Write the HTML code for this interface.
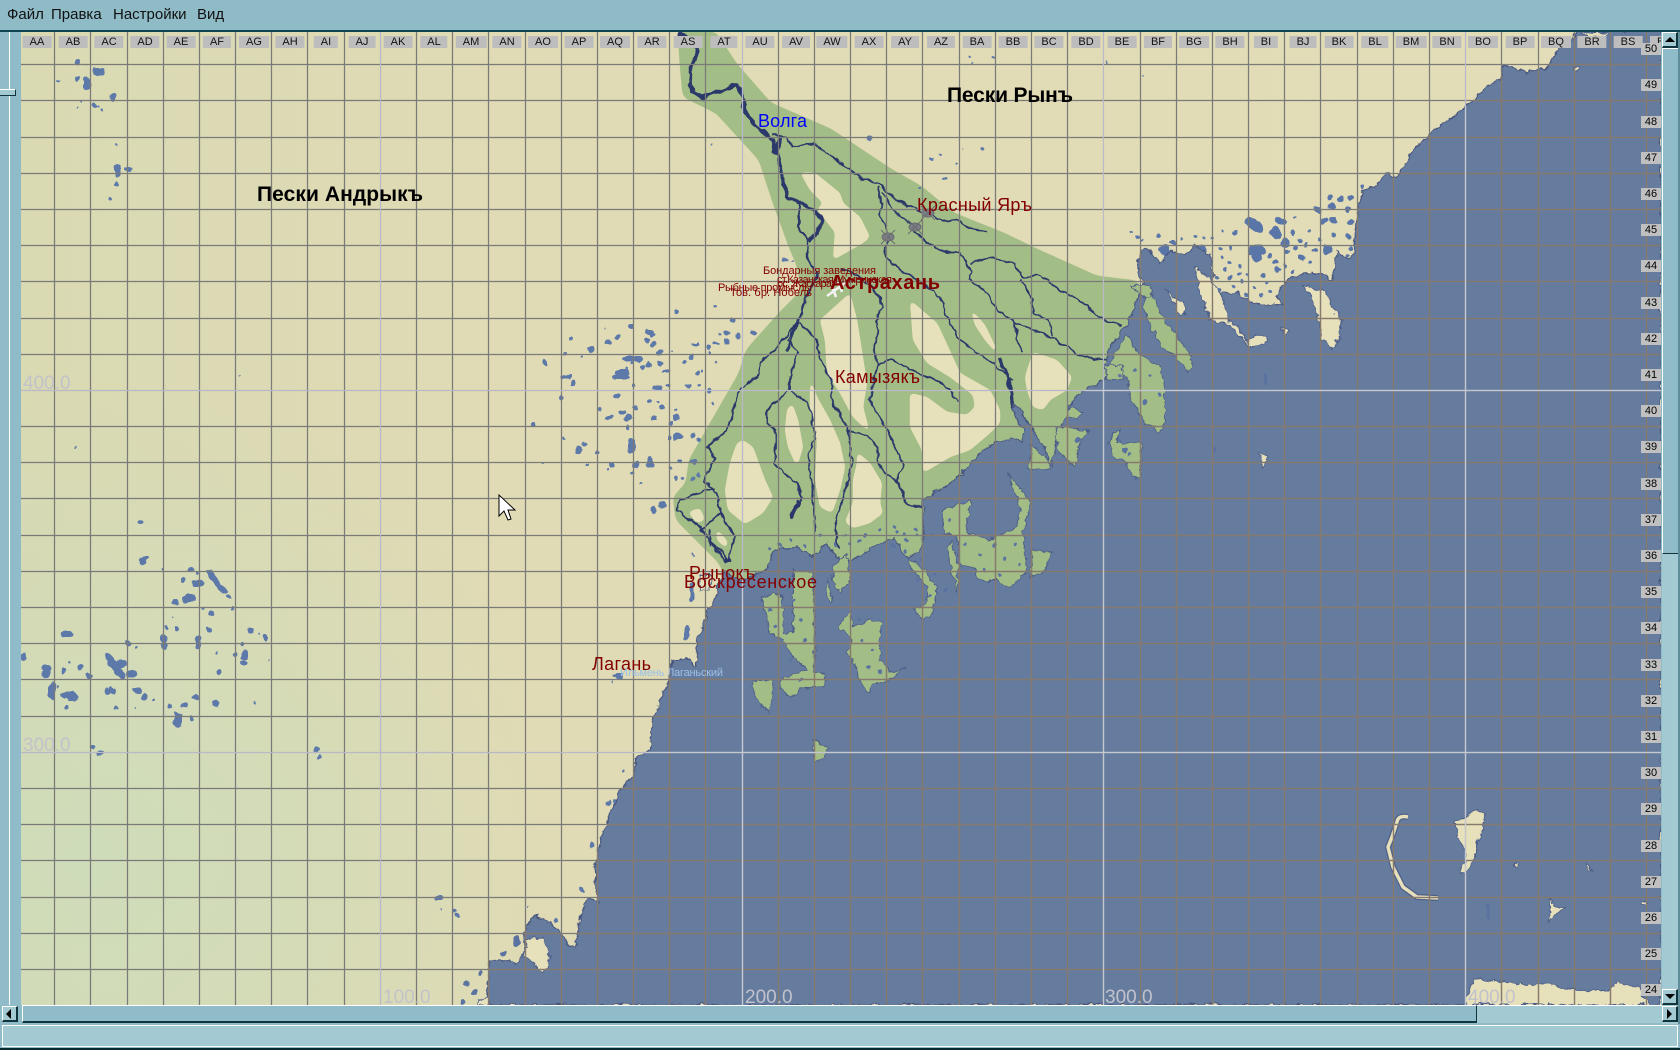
<!DOCTYPE html>
<html lang="ru"><head><meta charset="utf-8"><title>Карта</title>
<style>
html,body{margin:0;padding:0;background:#8fbcc8;width:1680px;height:1050px;overflow:hidden;font-family:"Liberation Sans","Noto Sans CJK SC",sans-serif}
.a{position:absolute}
#menu{left:0;top:0;width:1680px;background:#8fbbc7;border-bottom:2px solid #0e4450;box-sizing:content-box;height:30px}
#menu span{position:absolute;top:6px;font-size:15px;color:#111;line-height:18px}
#cols{left:21px;top:36px;width:1640px;height:12px;overflow:hidden}
#cols span{position:absolute;top:0;height:12px;line-height:12px;font-size:11px;background:#bdbdbd;color:#111;padding:0 7px;transform:translateX(-50%);margin-left:-21px}
#rows span{position:absolute;left:1641px;width:20px;height:12px;line-height:12px;font-size:11px;background:#c0c0c0;color:#000;text-align:center}
.btn{position:absolute;box-sizing:border-box;width:16px;height:16px;background:#a3c9d2;border-top:1px solid #fff;border-left:1px solid #fff;border-right:2px solid #10343c;border-bottom:2px solid #10343c}
</style></head><body>
<svg class="a" style="left:0;top:0" width="1680" height="1050" viewBox="0 0 1680 1050">
<defs>
<linearGradient id="land" x1="0" y1="0" x2="1" y2="0"><stop offset="0" stop-color="#d9d9b2"/><stop offset=".12" stop-color="#dbdab4"/><stop offset=".3" stop-color="#e0dbb4"/><stop offset="1" stop-color="#e3ddb8"/></linearGradient>
<radialGradient id="lg" gradientUnits="userSpaceOnUse" cx="90" cy="860" r="480"><stop offset="0" stop-color="#cedcba" stop-opacity=".95"/><stop offset="1" stop-color="#cedcba" stop-opacity="0"/></radialGradient>
<filter id="rough" filterUnits="userSpaceOnUse" x="0" y="0" width="1680" height="1050"><feTurbulence type="fractalNoise" baseFrequency=".14" numOctaves="3" seed="4" result="n"/><feDisplacementMap in="SourceGraphic" in2="n" scale="7" xChannelSelector="R" yChannelSelector="G"/></filter>
<filter id="wig" filterUnits="userSpaceOnUse" x="0" y="0" width="1680" height="1050"><feTurbulence type="fractalNoise" baseFrequency=".11" numOctaves="2" seed="9" result="n"/><feDisplacementMap in="SourceGraphic" in2="n" scale="6" xChannelSelector="R" yChannelSelector="G"/></filter>
<filter id="goo" filterUnits="userSpaceOnUse" x="0" y="0" width="1680" height="1050" color-interpolation-filters="sRGB"><feGaussianBlur stdDeviation="4"/><feColorMatrix values="1 0 0 0 0 0 1 0 0 0 0 0 1 0 0 0 0 0 14 -6"/></filter>
<filter id="goo2" filterUnits="userSpaceOnUse" x="0" y="0" width="1680" height="1050" color-interpolation-filters="sRGB"><feGaussianBlur stdDeviation="2.5"/><feColorMatrix values="1 0 0 0 0 0 1 0 0 0 0 0 1 0 0 0 0 0 14 -6"/></filter>
<clipPath id="map"><rect x="21" y="32" width="1640" height="973"/></clipPath>
<path id="seaP" d="M1580 30L1661 30L1661 1005L488 1005L488 960L500 960L517 963L525 950L523 933L535 915L547 920L560 933L570 945L575 947L578 933L581 910L590 898L598 902L595 880L595 860L600 845L605 827L612 810L620 790L633 775L637 757L650 750L653 720L660 700L668 680L672 660L685 658L697 667L697 640L700 633L706 615L713 603L717 590L725 572L740 580L763 573L770 558L777 550L797 547L813 557L827 543L840 563L857 557L870 548L883 543L893 537L907 557L917 553L923 545L923 500L935 492L945 487L960 475L978 455L990 445L1010 437L1022 442L1025 432L1015 415L1012 405L1020 410L1030 425L1045 450L1052 466L1056 440L1062 425L1070 405L1080 393L1095 385L1107 377L1105 365L1110 347L1127 325L1135 305L1143 285L1137 262L1140 250L1150 250L1160 265L1170 250L1185 255L1195 245L1210 255L1213 280L1213 300L1222 293L1237 293L1253 303L1283 305L1277 297L1287 278L1313 272L1333 280L1337 250L1348 260L1355 253L1355 233L1358 210L1363 190L1377 185L1387 173L1393 178L1402 170L1413 150L1436 129L1462 110L1495 80L1500 80L1505 65L1527 72L1547 68L1560 47L1573 37Z"/>
<clipPath id="seaC"><use href="#seaP"/></clipPath>
<path id="gridD" d="M54.5 32V1005M90.5 32V1005M127.5 32V1005M163.5 32V1005M199.5 32V1005M235.5 32V1005M271.5 32V1005M307.5 32V1005M344.5 32V1005M416.5 32V1005M452.5 32V1005M488.5 32V1005M525.5 32V1005M561.5 32V1005M597.5 32V1005M633.5 32V1005M669.5 32V1005M705.5 32V1005M778.5 32V1005M814.5 32V1005M850.5 32V1005M886.5 32V1005M922.5 32V1005M959.5 32V1005M995.5 32V1005M1031.5 32V1005M1067.5 32V1005M1140.5 32V1005M1176.5 32V1005M1212.5 32V1005M1248.5 32V1005M1284.5 32V1005M1320.5 32V1005M1357.5 32V1005M1393.5 32V1005M1429.5 32V1005M1501.5 32V1005M1538.5 32V1005M1574.5 32V1005M1610.5 32V1005M1646.5 32V1005M21 64.5H1661M21 100.5H1661M21 137.5H1661M21 173.5H1661M21 209.5H1661M21 245.5H1661M21 281.5H1661M21 318.5H1661M21 354.5H1661M21 426.5H1661M21 462.5H1661M21 498.5H1661M21 535.5H1661M21 571.5H1661M21 607.5H1661M21 643.5H1661M21 679.5H1661M21 716.5H1661M21 788.5H1661M21 824.5H1661M21 860.5H1661M21 897.5H1661M21 933.5H1661M21 969.5H1661"/>
<path id="lightD" d="M380.5 32V1005M742.5 32V1005M1103.5 32V1005M1465.5 32V1005M21 390.5H1661M21 752.5H1661"/>
</defs>
<g clip-path="url(#map)">
<rect x="0" y="0" width="1680" height="1050" fill="url(#land)"/>
<rect x="0" y="380" width="700" height="670" fill="url(#lg)"/>
<!-- delta green -->
<g filter="url(#goo)">
<polygon fill="#a3bd86" points="678,32 680,65 683,97 716,113 759,160 773,203 789,247 796,263 802,290 779,313 746,350 739,373 716,413 689,460 686,483 673,497 676,520 696,540 719,563 736,600 1200,600 1139,281 1097,276 1037,249 1004,233 954,213 921,186 891,169 831,129 771,103 736,63 716,32"/>
</g>
<g filter="url(#goo2)" fill="#e6e0bb">
<polygon points="800,172 815,173 840,193 843,203 860,217 870,237 863,243 833,260 835,232 817,210 823,203 810,190"/>
<polygon points="820,320 850,293 857,320 867,383 863,407 870,433 853,417 840,393 827,373 825,340"/>
<polygon points="810,377 817,397 830,420 840,443 845,467 840,490 832,513 820,507 815,480 817,440 810,407"/>
<polygon points="792,403 798,420 803,447 797,467 788,447 785,430 787,410"/>
<polygon points="743,440 753,447 765,480 773,497 763,513 745,524 728,510 725,490 730,463 737,443"/>
<polygon points="857,452 870,463 882,483 880,503 883,513 870,523 853,528 845,522 853,503 853,480 857,463"/>
<polygon points="910,300 937,323 945,340 960,373 990,390 1000,410 1000,423 990,433 970,450 950,457 923,473 922,450 910,427 910,393 927,397 947,412 967,415 975,407 973,395 950,377 927,363 913,340"/>
<polygon points="970,308 985,325 997,350 995,352 985,340 975,325"/>
<polygon points="1033,352 1057,360 1072,377 1067,390 1050,400 1043,410 1033,407 1027,390 1025,377"/>
<polygon points="688,512 700,508 705,520 697,523"/>
<polygon points="716,528 728,542 726,548 717,540"/>
</g>
<!-- land lakes -->
<g filter="url(#wig)">
<g fill="none" stroke="#5d79a9" stroke-linecap="round" stroke-linejoin="round">
<path stroke-width="2" d="M86 65h0M80 102h0M77 109h0M173 617h0M135 708h0M254 702h0M270 659h0M259 634h0M605 329h0M673 351h0M543 463h0M241 375h0M713 145h0M963 149h0M940 155h0M957 164h0M970 58h0M972 63h0M1106 63h0M1142 77h0M792 260h0M442 910h0M527 907h0M611 682h0M693 554h0M76 447h0"/>
<path stroke-width="3" d="M163 569h0M197 573h0M229 597h1M232 609h0M203 608h0M166 627h0M216 653h0M137 648h0M69 662h0M58 687h0M153 700h1M116 708h1M58 81h1M98 106h0M102 109h0M582 357h0M565 354h0M626 368h0M632 363h0M658 402h0M649 402h0M675 410h0M563 438h0M597 452h0M609 468h0M587 464h0M632 473h0M641 483h0M670 468h0M699 385h0M703 371h0M716 362h0M710 352h0M720 334h0M712 404h0M676 479h0M682 479h0M693 344h5M663 371h5M715 343h3M652 418h4M635 386h0M668 386h1M784 260h2M733 321h0M715 307h0M983 148h1M931 158h0M994 58h0M920 188h0M944 178h0M1132 232h0M1143 241h0M1182 239h0M1195 237h0M1205 237h0M1213 238h0M1223 231h0M1296 218h0M1310 230h0M1248 275h0M1263 275h0M1242 282h0M1203 288h3M1233 287h0M1267 283h0M116 145h0M110 199h0M1613 57h0M1622 55h0M662 767h0M623 772h0"/>
<path stroke-width="5" d="M78 61h0M78 80h0M128 169h1M116 184h0M94 105h0M183 580h0M191 569h1M218 585h0M211 613h0M177 629h0M208 630h2M249 630h2M265 637h1M242 643h0M235 655h0M244 663h0M219 672h0M89 676h0M80 667h2M63 671h1M67 707h0M169 706h0M183 706h2M192 718h0M100 753h1M93 747h0M315 750h2M319 758h0M630 326h0M617 337h1M571 339h0M607 342h1M545 363h0M648 331h4M651 334h2M647 340h0M653 344h0M659 352h1M643 367h1M649 365h0M660 363h1M625 359h15M617 372h10M614 377h13M564 377h5M573 383h0M655 387h5M688 385h1M685 362h0M692 357h0M697 373h1M709 347h0M727 333h0M726 342h0M738 336h0M753 333h1M733 321h1M709 391h1M561 397h1M616 396h2M649 402h0M662 407h0M635 408h0M600 409h0M608 418h1M620 412h4M628 428h0M672 423h0M669 438h0M693 436h0M699 441h0M533 426h0M584 444h1M597 452h0M612 464h2M680 461h0M693 462h1M698 475h0M692 479h0M870 138h0M784 260h0M677 312h0M455 911h0M458 916h0M436 898h5M557 920h0M618 676h3M615 802h0M608 803h0M592 845h0M582 890h0M141 522h0M145 559h1"/>
<path stroke-width="7" d="M97 72h3M87 80h0V87M143 562h0M195 583h5M186 598h7M175 603h0M64 634h6M128 643h0M245 654h0V657M198 639h0V646M80 667h0M137 690h0M144 697h0M196 697h0M217 704h0M107 692h0M113 690h0M52 685h0V697M68 697h7M23 657h0M591 350h0M628 418h0M677 418h0M632 442h0V448M632 451h0M636 465h0M650 459h0V464M579 450h0M677 436h2M663 505h0M653 510h0M113 97h0M118 168h0V175"/>
<path stroke-width="5" d="M692 585h0V599M687 628h0V639"/>
<path stroke-width="6" d="M210 573l8 12l7 7"/>
<path stroke-width="8" d="M108 657l8 12l5 6M120 664h3M130 674h4M46 668h2M46 674h2M66 695h6M163 638h2M165 645h0M178 716h0V724"/>
</g>
<g fill="none" stroke="#5a76a8" stroke-linecap="round">
<path stroke-width="4" d="M1137 237h0M1157 236h1M1172 242h2M1235 233h1M1293 233h0M1230 248h0M1220 248h0M1223 257h0M1230 263h0M1240 265h0M1293 272h0M1263 275h0M1255 287h0M1217 278h0M1203 297h0M1217 312h0M1320 240h0M1350 248h0M1287 252h0M1348 257h0M1362 187h0M1350 198h1M1245 295h0M1260 295h0M1270 255h0M1285 265h0M1305 245h0M1315 250h0M1310 262h0M1225 270h0M1240 275h0M1205 275h0M1270 292h0M1300 240h0"/>
<path stroke-width="6" d="M1278 221h6M1323 220h2M1332 220h2M1330 198h0M1340 199h0M1318 210h0M1330 207h3M1348 209h0M1300 258h2M1295 248h0M1277 270h0M1275 262h0M1230 277h0M1218 290h0M1213 303h0M1350 222h0M1333 235h0M1348 237h0"/>
<path stroke-width="10" d="M1250 222l8 6M1275 232l2 2M1285 243h0M1253 250h8M1257 258h0M1163 250h2M1200 250v10M1327 250h0"/>
</g>
</g>
<!-- rivers -->
<g filter="url(#wig)" fill="none" stroke="#2c386a" stroke-linecap="round" stroke-linejoin="round">
<path stroke-width="3.8" d="M680 33L698 50L690 73L692 92L703 98L717 92L737 85L743 97L745 113L757 127L772 140L778 157L783 180L787 197L800 203L813 210L822 220L817 233L810 240"/>
<path stroke-width="2.4" d="M800 205L798 227L807 240L807 257L817 273L810 290L798 322L787 350"/>
<path stroke-width="3.5" d="M1000 360L1006 372L1010 385L1013 407"/>
<path stroke-width="1.7" d="M773 135L787 137L793 148L813 143L827 153L847 167L863 180L877 183L893 197L910 207L927 213L943 222L957 220L970 228L988 232M877 187L882 203L880 217L887 230L887 243L885 257L897 268L913 277L927 287L940 297L947 317L957 337L973 350L993 363L1012 380M882 193L897 213L913 227L920 237L927 243L943 252L960 252L972 270L970 280L987 293L997 310L1017 323L1050 337L1083 357L1107 360M972 263L993 258L1013 263L1023 277L1040 275L1060 290L1083 303L1103 320L1122 325M1022 280L1032 300L1033 313L1048 320L1052 335M1015 323L1017 340L1023 353"/>
<path stroke-width="1.8" d="M843 268L867 283L880 297L883 307L877 320L875 350L877 365L870 400L887 430L903 463L897 480L907 503L922 508M877 365L890 360L910 370L940 382L950 390L958 402M798 322L777 347L760 363L757 377L740 390L727 430L707 447L715 457L705 480L718 497L720 513L735 537L728 560M798 322L788 340L798 353L790 377L790 390L767 410L767 423L775 430L775 463L797 483L802 497L793 517M790 390L807 403L813 417L815 440L808 453L813 493L815 530M798 322L817 340L820 360L832 383L832 403L848 428L852 463L843 497L835 523L838 547M848 430L867 435L877 447L880 467L898 483L907 503M713 488L680 500L677 510L700 527L725 562M720 513L700 530L710 540L728 560M710 530V545"/>
<path stroke-width="5" d="M797 503L792 517M780 140L775 152M727 560h2"/>
</g>
<!-- sea -->
<g filter="url(#rough)">
<use href="#seaP" fill="#667c9e" stroke="#49577f" stroke-width="1.2"/>
<g stroke="#4f5f88" stroke-width="1">
<g fill="#a3bd86">
<polygon points="762,597 782,593 783,633 793,633 793,570 813,573 815,647 813,673 825,673 823,687 803,687 790,698 780,687 783,677 807,670 793,657 783,640 770,633"/>
<polygon points="753,680 773,680 773,697 768,713 757,698 752,687"/>
<polygon points="850,610 853,627 870,620 883,622 880,640 880,660 893,673 905,667 890,680 873,683 870,693 860,683 857,667 847,653 852,640 838,627"/>
<polygon points="827,580 833,597 830,603 825,590"/>
<polygon points="833,567 847,553 850,580 840,593 832,580"/>
<polygon points="907,557 927,573 937,587 933,613 923,620 913,610 927,603 927,587 913,570"/>
<polygon points="952,540 958,567 957,593 952,573 947,547"/>
<polygon points="943,510 970,500 967,533 990,540 1017,527 1020,507 1013,487 1007,473 1027,497 1032,503 1023,530 1027,573 1008,588 997,580 978,580 975,567 960,567 957,537 943,533"/>
<polygon points="1033,550 1053,553 1042,573 1030,577"/>
<polygon points="1127,335 1137,352 1160,367 1165,390 1165,423 1160,433 1143,420 1138,410 1130,397 1127,377 1110,367 1113,357"/>
<polygon points="1145,293 1153,293 1160,313 1173,330 1190,353 1193,367 1188,373 1178,360 1163,347 1150,327 1143,307"/>
<polygon points="1057,427 1070,428 1090,430 1080,443 1075,467 1067,460 1058,450 1055,433"/>
<polygon points="1113,433 1120,430 1117,443 1133,443 1142,443 1140,478 1132,477 1127,463 1113,457 1108,443"/>
<polygon points="1105,365 1122,365 1123,380 1108,380"/>
<polygon points="813,740 820,744 828,748 822,760 814,762"/>
<polygon points="1032,445 1050,462 1048,470 1028,468"/>
<polygon points="1070,408 1082,412 1078,420 1066,416"/>
<polygon points="1133,285 1150,285 1152,296 1140,296"/>
</g>
<g fill="#e6e0bb">
<polygon points="1165,287 1173,297 1185,303 1185,315 1182,318 1175,307"/>
<polygon points="1195,268 1205,273 1213,283 1220,293 1227,313 1227,320 1240,327 1247,342 1257,335 1267,337 1267,342 1257,347 1248,347 1242,337 1227,323 1210,320 1200,293"/>
<polygon points="1303,285 1320,290 1330,297 1333,310 1342,320 1340,337 1332,348 1322,338 1318,317 1313,303"/>
<polygon points="1282,327 1287,330 1287,335 1283,334"/>
<polygon points="1260,452 1267,454 1266,462 1263,467 1260,460"/>
<polygon points="527,938 543,937 550,957 548,967 542,973 533,962 523,957"/>
<polygon points="1477,809 1485,813 1483,830 1477,843 1477,855 1465,873 1460,875 1462,867 1467,853 1463,847 1457,837 1457,825 1453,822 1463,818"/>
<polygon points="1550,897 1555,908 1567,908 1557,913 1548,922 1550,913"/>
<polygon points="1473,978 1500,982 1533,985 1550,983 1570,990 1610,990 1617,982 1637,987 1652,1005 1465,1005"/>
<polygon points="1575,32 1610,32 1605,37 1590,38 1585,34"/>
<polygon points="1572,68 1578,66 1581,69 1574,72"/>
<polygon points="1640,900 1648,902 1648,905 1641,904"/>
<polygon points="1586,863 1590,865 1592,871 1589,870"/>
<polygon points="1514,862 1517,863 1518,868 1515,867"/>
<polygon points="478,1000 488,998 488,1005 478,1005"/>
<polygon points="700,575 712,575 710,590 700,590"/>
</g>
</g>
</g>
<path d="M1408 817Q1398 815 1397 822L1392 837L1388 847L1393 867L1403 887L1417 897L1438 898" fill="none" stroke="#4f5f88" stroke-width="6"/>
<path d="M1408 817Q1398 815 1397 822L1392 837L1388 847L1393 867L1403 887L1417 897L1438 898" fill="none" stroke="#e6e0bb" stroke-width="3.5"/>
<!-- marsh dots -->
<g filter="url(#wig)" fill="none" stroke="#5a72a0" stroke-linecap="round">
<path stroke-width="3.5" d="M897 532h0M907 540h0M917 535h0M930 535h0M892 545h0M905 552h0M920 560h0M935 575h0M945 590h0M930 595h0M918 580h0M965 545h0M950 520h0M980 555h0M995 545h0M1005 560h0M1015 545h0M985 570h0M1000 575h0M1020 565h0M860 620h0M862 640h0M872 650h0M868 668h0M880 672h0M795 600h0M800 620h0M805 640h0M790 660h0M800 680h0M770 610h0M775 625h0M1150 375h0M1120 440h0M1130 455h0M1160 395h0M1135 370h0M1120 375h0M780 545h0M790 540h0M805 545h0M820 535h0M835 545h0M850 545h0M865 535h0M880 530h0M895 527h0M905 535h0M915 530h0M770 548h0M845 535h0M860 540h0"/>
<path stroke-width="6" d="M1145 402h0M1125 450h0M1078 440h0M480 973h0M475 993h0M467 983h0M463 1002h0M503 953h0M517 938v5"/>
<path stroke-width="3" d="M1488 905v14M1265 376v8M1215 447v5M615 676h0"/>
</g>
<!-- fort icons -->
<g fill="#7b7d84" stroke="#6a6c72" stroke-width="1">
<ellipse cx="888" cy="237" rx="6" ry="4"/><path d="M881 230l14 14M895 230l-14 14"/>
<ellipse cx="915" cy="227" rx="6" ry="4"/><path d="M908 220l14 14M922 220l-14 14"/>
<ellipse cx="928" cy="213" rx="6" ry="4"/><path d="M921 206l14 14M935 206l-14 14"/>
</g>
<!-- plane -->
<path d="M827 296L845 283M832 286l4 11M838 282l4 10" stroke="#f2f2f2" stroke-width="2.6" fill="none"/>
<!-- grid -->
<use href="#gridD" fill="none" stroke="#7a7a79" stroke-width="1.25"/>
<g clip-path="url(#seaC)"><use href="#gridD" fill="none" stroke="#87796c" stroke-width="1.25"/></g>
<use href="#lightD" fill="none" stroke="#b9b8c8" stroke-width="1.25"/>
<g clip-path="url(#seaC)"><use href="#lightD" fill="none" stroke="#c6c8d0" stroke-width="1.25"/></g>
<!-- coord labels -->
<g font-family="'Liberation Sans',sans-serif" font-size="19" fill="#c2c2ca">
<text x="23" y="389">400.0</text><text x="23" y="751">300.0</text>
<text x="383" y="1003">100.0</text><text x="745" y="1003">200.0</text><text x="1105" y="1003">300.0</text><text x="1468" y="1003">400.0</text>
</g>
<!-- names -->
<g font-family="'Liberation Sans','Noto Sans CJK SC',sans-serif">
<g fill="#000" font-weight="bold" font-size="21">
<text x="257" y="201" textLength="166">Пески Андрыкъ</text>
<text x="947" y="102" textLength="126">Пески Рынъ</text>
</g>
<text x="758" y="127" font-size="18" fill="#0000ff" textLength="49">Волга</text>
<g fill="#820000">
<text x="917" y="211" font-size="18" textLength="115">Красный Яръ</text>
<text x="763" y="274" font-size="11" textLength="113">Бондарныя заведения</text>
<text x="777" y="283" font-size="11" textLength="115">ст.Казанская Мумринская</text>
<text x="777" y="287" font-size="11" textLength="55">ос. Жаскара</text>
<text x="718" y="291" font-size="11" textLength="94">Рыбные промыслы</text>
<text x="730" y="296" font-size="11" textLength="82">Тов. бр. Нобель</text>
<text x="830" y="289" font-size="20" font-weight="bold" textLength="110">Астрахань</text>
<text x="835" y="383" font-size="18" textLength="85">Камызякъ</text>
<text x="689" y="579" font-size="18" textLength="66">Рынокъ</text>
<text x="684" y="588" font-size="18" textLength="133">Воскресенское</text>
<text x="592" y="670" font-size="18" textLength="59">Лагань</text>
</g>
<text x="620" y="676" font-size="11" fill="#9cc0e8" textLength="103">Ильмень Лаганьский</text>
</g>
<!-- cursor -->
<polygon points="499,495 499,516 504,511 508,520 511,519 508,510 515,510" fill="#fff" stroke="#000" stroke-width="1"/>
</g>
</svg>

<div class="a" id="menu"><span style="left:7px">Файл</span><span style="left:51px">Правка</span><span style="left:113px">Настройки</span><span style="left:197px">Вид</span></div>

<div class="a" id="cols">
<span style="left:37px">AA</span><span style="left:73px">AB</span><span style="left:109px">AC</span><span style="left:145px">AD</span><span style="left:181px">AE</span><span style="left:217px">AF</span><span style="left:254px">AG</span><span style="left:290px">AH</span><span style="left:326px">AI</span><span style="left:362px">AJ</span><span style="left:398px">AK</span><span style="left:434px">AL</span><span style="left:471px">AM</span><span style="left:507px">AN</span><span style="left:543px">AO</span><span style="left:579px">AP</span><span style="left:615px">AQ</span><span style="left:652px">AR</span><span style="left:688px">AS</span><span style="left:724px">AT</span><span style="left:760px">AU</span><span style="left:796px">AV</span><span style="left:832px">AW</span><span style="left:869px">AX</span><span style="left:905px">AY</span><span style="left:941px">AZ</span><span style="left:977px">BA</span><span style="left:1013px">BB</span><span style="left:1049px">BC</span><span style="left:1086px">BD</span><span style="left:1122px">BE</span><span style="left:1158px">BF</span><span style="left:1194px">BG</span><span style="left:1230px">BH</span><span style="left:1266px">BI</span><span style="left:1303px">BJ</span><span style="left:1339px">BK</span><span style="left:1375px">BL</span><span style="left:1411px">BM</span><span style="left:1447px">BN</span><span style="left:1483px">BO</span><span style="left:1520px">BP</span><span style="left:1556px">BQ</span><span style="left:1592px">BR</span><span style="left:1628px">BS</span><span style="left:1664px">BT</span>
</div>
<div id="rows">
<span style="top:43px">50</span><span style="top:79px">49</span><span style="top:116px">48</span><span style="top:152px">47</span><span style="top:188px">46</span><span style="top:224px">45</span><span style="top:260px">44</span><span style="top:297px">43</span><span style="top:333px">42</span><span style="top:369px">41</span><span style="top:405px">40</span><span style="top:441px">39</span><span style="top:478px">38</span><span style="top:514px">37</span><span style="top:550px">36</span><span style="top:586px">35</span><span style="top:622px">34</span><span style="top:659px">33</span><span style="top:695px">32</span><span style="top:731px">31</span><span style="top:767px">30</span><span style="top:803px">29</span><span style="top:840px">28</span><span style="top:876px">27</span><span style="top:912px">26</span><span style="top:948px">25</span><span style="top:984px">24</span>
</div>

<!-- left strip -->
<div class="a" style="left:9px;top:32px;width:1px;height:992px;background:#fff"></div>
<div class="a" style="left:0;top:89px;width:16px;height:7px;box-sizing:border-box;background:#a3c9d2;border-top:1px solid #fff;border-right:1px solid #10343c;border-bottom:1px solid #10343c"></div>

<!-- right scrollbar -->
<div class="a" style="left:1662px;top:32px;width:18px;height:992px;background:#a3c9d2"></div>
<div class="a" style="left:1662px;top:48px;width:16px;height:506px;box-sizing:border-box;background:#8fbcc8;border-top:1px solid #fff;border-left:1px solid #fff;border-bottom:1px solid #10343c"></div>
<div class="a" style="left:1678px;top:32px;width:2px;height:992px;background:#5f8e9a"></div>
<div class="btn" style="left:1662px;top:32px"></div>
<div class="a" style="left:1665px;top:37px;width:0;height:0;border-left:5px solid transparent;border-right:5px solid transparent;border-bottom:5px solid #000"></div>
<div class="btn" style="left:1662px;top:989px"></div>
<div class="a" style="left:1665px;top:994px;width:0;height:0;border-left:5px solid transparent;border-right:5px solid transparent;border-top:5px solid #000"></div>

<!-- bottom scrollbar -->
<div class="a" style="left:0;top:1005px;width:1662px;height:19px;background:#8fbcc8"></div>
<div class="a" style="left:22px;top:1005px;width:1455px;height:18px;box-sizing:border-box;background:#8fbcc8;border-top:1px solid #fff;border-left:1px solid #fff;border-right:1px solid #10343c;border-bottom:2px solid #10343c"></div>
<div class="a" style="left:1477px;top:1005px;width:185px;height:18px;box-sizing:border-box;background:#a3c9d2;border-top:1px solid #fff"></div>
<div class="btn" style="left:2px;top:1006px"></div>
<div class="a" style="left:6px;top:1009px;width:0;height:0;border-top:5px solid transparent;border-bottom:5px solid transparent;border-right:5px solid #000"></div>
<div class="btn" style="left:1662px;top:1006px"></div>
<div class="a" style="left:1667px;top:1009px;width:0;height:0;border-top:5px solid transparent;border-bottom:5px solid transparent;border-left:5px solid #000"></div>

<!-- status bar -->
<div class="a" style="left:0;top:1024px;width:1680px;height:26px;background:#8fbcc8"></div>
<div class="a" style="left:2px;top:1025px;width:1676px;height:22px;box-sizing:border-box;background:#a3c9d2;border:1px solid #fff"></div>
<div class="a" style="left:0;top:1048px;width:1680px;height:2px;background:#0a2a32"></div>
</body></html>
